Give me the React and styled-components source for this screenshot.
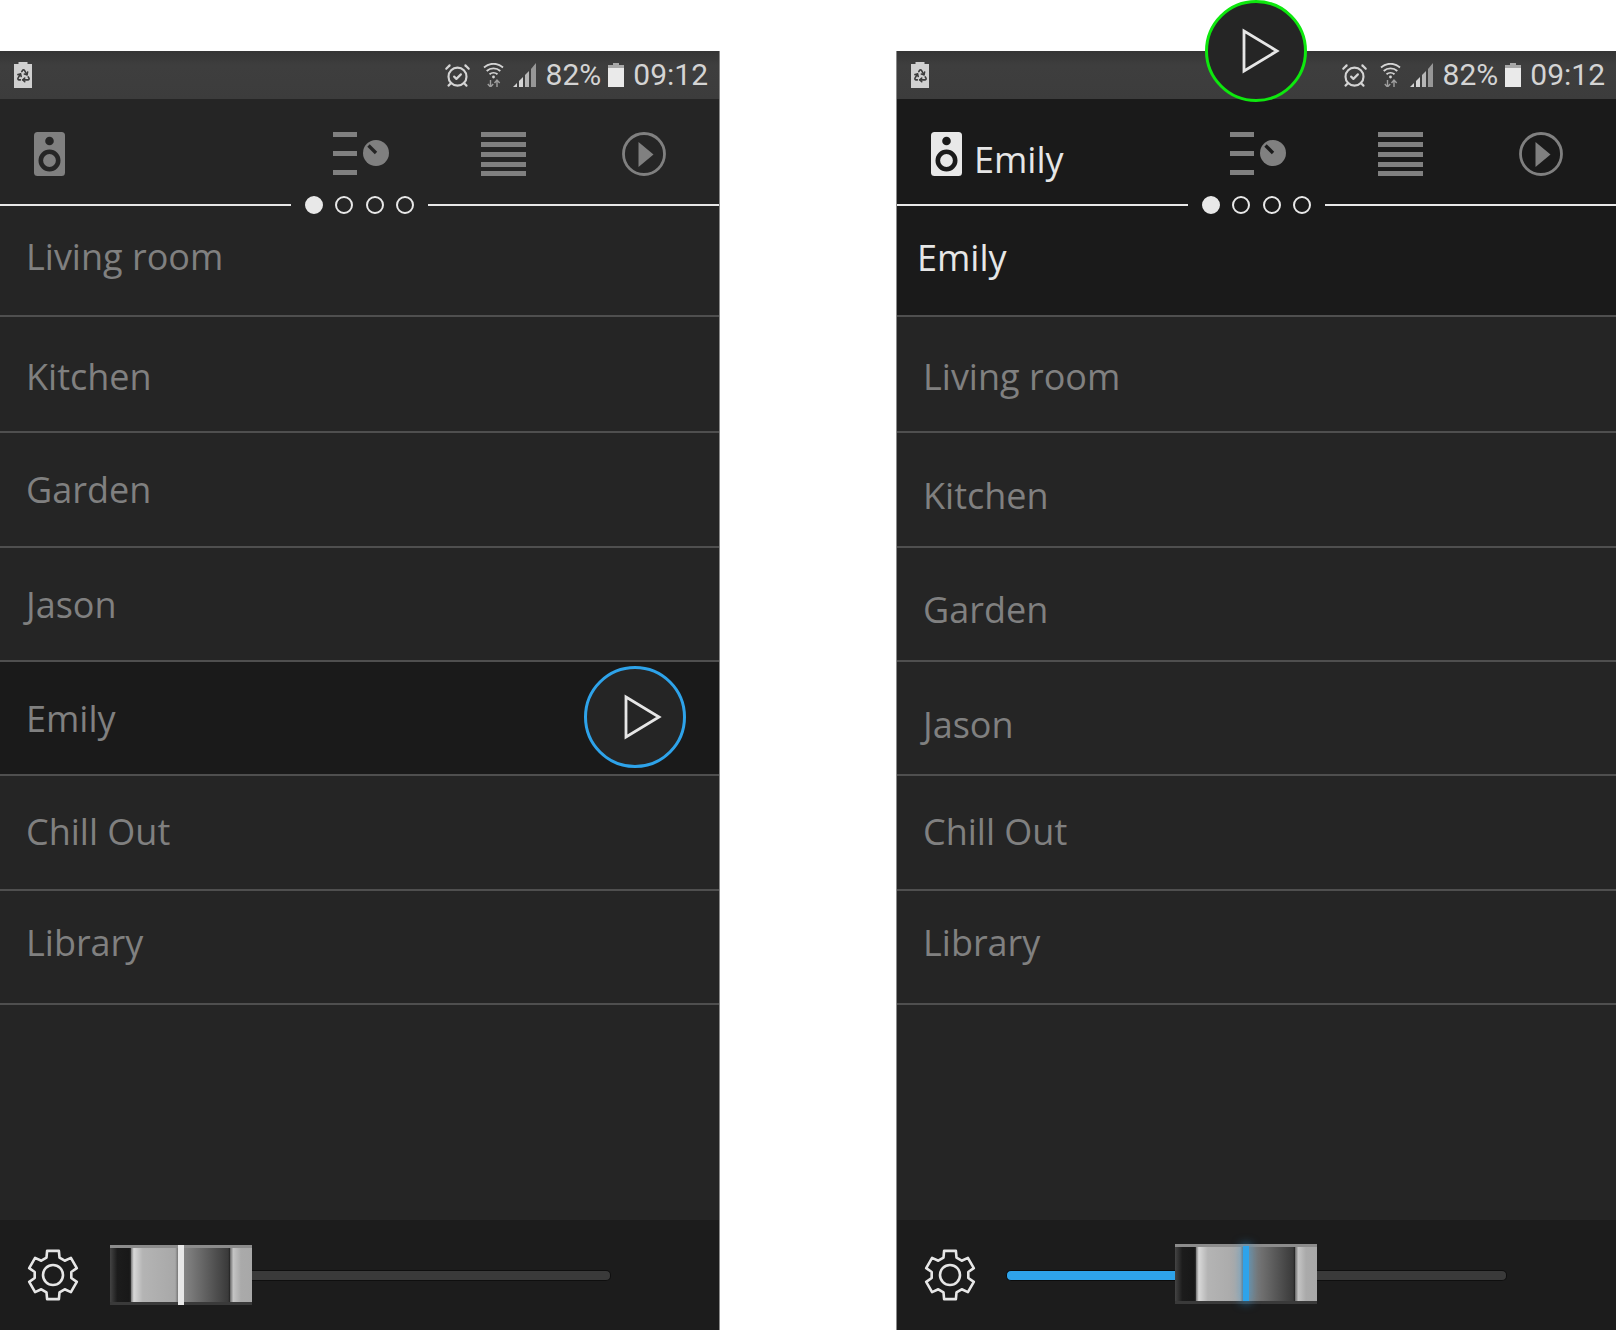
import React from "react";
import styled, { createGlobalStyle } from "styled-components";
import { AlarmClockCheck, Recycle } from "lucide-react";

const Global = createGlobalStyle`
  html, body { margin: 0; padding: 0; background: #fff; }
  body { font-family: "Open Sans", "Liberation Sans", sans-serif; overflow: hidden; }
  * { box-sizing: border-box; }
`;

const Page = styled.div`
  width: 1616px;
  height: 1330px;
  padding-top: 51px;
  display: flex;
  gap: 176px;
  background: #fff;
`;

const Phone = styled.section`
  position: relative;
  width: 720px;
  height: 1279px;
  display: flex;
  flex-direction: column;
  background: #252525;
  border-${(p) => p.$edge}: 1px solid #8a8a8a;
`;

const StatusBar = styled.div`
  height: 48px;
  flex: none;
  display: flex;
  align-items: center;
  background: linear-gradient(#353535, #3e3e3e 30%, #3c3c3c);
  color: #d4d4d4;
  font-family: Roboto, "Liberation Sans", sans-serif;
  font-size: 30px;
  padding-left: ${(p) => p.$pad}px;
`;

const StatusSlot = styled.span`
  display: flex;
  align-items: center;
  flex: none;
  margin-left: ${(p) => p.$ml || 0}px;
`;

const StatusText = styled(StatusSlot)`
  margin-bottom: 2px;
`;

const StatusSpacer = styled.span`
  flex: 1;
`;

const BatteryBox = styled.span`
  position: relative;
  width: 18px;
  height: 26px;
  display: flex;
  align-items: center;
  justify-content: center;
  color: #3c3c3c;
  background: #d0d0d0;
  clip-path: polygon(0 2px, 25% 2px, 25% 0, 75% 0, 75% 2px, 100% 2px, 100% 100%, 0 100%);
`;

const Header = styled.header`
  flex: none;
  height: 115px;
  display: flex;
  flex-direction: column;
  background: ${(p) => (p.$dark ? "#1a1a1a" : "#252525")};
`;

const HeaderIcons = styled.div`
  height: 97px;
  display: flex;
  align-items: flex-start;
  padding-top: 33px;
`;

const Brand = styled.div`
  flex: 1;
  display: flex;
  align-items: flex-start;
  gap: 12px;
  padding-left: ${(p) => p.$pad}px;
  color: ${(p) => p.$color};
`;

const BrandName = styled.span`
  font-size: 36px;
  line-height: 50px;
  color: #e6e6e6;
  margin-top: 3px;
`;

const Nav = styled.nav`
  display: grid;
  grid-template-columns: 148px 141px 97px;
  justify-items: start;
  color: #808080;
`;

const Divider = styled.div`
  height: 18px;
  display: flex;
  align-items: center;
`;

const Rule = styled.span`
  flex: 1;
  height: 2.5px;
  background: #e8e8e8;
`;

const Dots = styled.span`
  display: flex;
  gap: 12.3px;
  margin: 0 14px;
`;

const Dot = styled.span`
  width: 18px;
  height: 18px;
  border-radius: 50%;
  border: 2px solid #e8e8e8;
  background: ${(p) => (p.$on ? "#e8e8e8" : "transparent")};
`;

const List = styled.ul`
  list-style: none;
  margin: 0;
  padding: 0;
  flex: 1;
`;

const Row = styled.li`
  position: relative;
  height: ${(p) => p.$h}px;
  padding: ${(p) => p.$pad}px 0 0 ${(p) => p.$left}px;
  font-size: 36px;
  line-height: 50px;
  color: ${(p) => (p.$bright ? "#e6e6e6" : "#808080")};
  background: ${(p) => (p.$dark ? "#1a1a1a" : "transparent")};
  border-bottom: 2px solid #4f4f4f;
`;

const PlayBubble = styled.button`
  position: absolute;
  padding: 0 0 0 ${(p) => p.$shift}px;
  width: 102px;
  height: 102px;
  border-radius: 50%;
  display: flex;
  align-items: center;
  justify-content: center;
  background: #252525;
  color: #e6e6e6;
  border: 3px solid ${(p) => p.$ring};
  z-index: 2;
`;

const RowBubble = styled(PlayBubble)`
  right: 33px;
  top: 4px;
`;

const TopBubble = styled(PlayBubble)`
  left: 308px;
  top: -51px;
`;

const Footer = styled.footer`
  flex: none;
  height: 110px;
  display: flex;
  align-items: center;
  background: #1c1c1c;
  padding-left: 27px;
  color: #e6e6e6;
`;

const Slider = styled.div`
  margin-left: ${(p) => p.$ml}px;
  width: 501px;
  height: 61px;
  display: flex;
  align-items: center;
`;

const Fill = styled.span`
  height: 11px;
  background: #2ea3ea;
  border: 1px solid #0c0c0c;
  border-right: 0;
  border-radius: 5px 0 0 5px;
`;

const Rest = styled.span`
  flex: 1;
  height: 11px;
  background: #3a3a3a;
  border: 1px solid #0f0f0f;
  border-left: 0;
  border-radius: 0 5px 5px 0;
`;

const Thumb = styled.span`
  position: relative;
  flex: none;
  width: 142px;
  height: 60px;
  display: grid;
  grid-template-columns: 21px 47px ${(p) => p.$mark}px 46px 1fr;
  border-top: 3px solid #8c8c8c;
  border-bottom: 3px solid #3a3a3a;
  margin-top: ${(p) => (p.$lift ? -2 : 0)}px;
`;

const ThumbDark = styled.span`
  background: linear-gradient(90deg, #444 0, #1c1c1c 35%, #181818 92%, #333 100%);
`;

const ThumbLight = styled.span`
  background: linear-gradient(90deg, #777 0, #d8d8d8 6%, #b4b4b4 25%, #a8a8a8 94%, #777 100%);
`;

const ThumbShade = styled.span`
  background: linear-gradient(90deg, #858585 0, #3a3a3a 96%, #222 100%);
`;

const ThumbEnd = styled.span`
  background: linear-gradient(90deg, #666 0, #c4c4c4 15%, #aaa 50%, #a8a8a8 100%);
`;

const ThumbMark = styled.span`
  background: ${(p) => p.$color};
  margin: ${(p) => (p.$glow ? "-1px 0 0" : "-3px 0")};
  box-shadow: ${(p) => (p.$glow ? "0 0 10px 2px rgba(46,163,234,.55)" : "none")};
  position: relative;
  z-index: 1;
`;

const gearPath = (() => {
  const c = 26;
  const pts = [];
  for (let i = 0; i < 6; i++) {
    const a = (-90 + i * 60) * (Math.PI / 180);
    const pt = (r, d) => [c + r * Math.cos(a + d), c + r * Math.sin(a + d)];
    pts.push(pt(18.5, -0.36), pt(24.8, -0.24), pt(24.8, 0.24), pt(18.5, 0.36));
  }
  return "M" + pts.map((p) => p.map((n) => n.toFixed(1)).join(" ")).join("L") + "Z";
})();

const Gear = () => (
  <svg width="52" height="52" viewBox="0 0 52 52" fill="none" stroke="currentColor" strokeWidth="2.6" strokeLinejoin="round">
    <path d={gearPath} />
    <circle cx="26" cy="26" r="10" />
  </svg>
);

const Speaker = ({ bg }) => (
  <svg width="31" height="44" viewBox="0 0 31 44">
    <rect width="31" height="44" rx="3.5" fill="currentColor" />
    <circle cx="15.5" cy="9" r="4.3" fill={bg} />
    <circle cx="15.5" cy="28.5" r="8.7" fill="none" stroke={bg} strokeWidth="4.6" />
  </svg>
);

const KnobMenu = ({ bg }) => (
  <svg width="56" height="44" viewBox="0 0 56 44" fill="currentColor">
    <rect width="24" height="5" />
    <rect y="19" width="24" height="5" />
    <rect y="38" width="24" height="5" />
    <circle cx="43" cy="21" r="13" />
    <path d="M35.500 13.500 43 21" stroke={bg} strokeWidth="3.400" />
  </svg>
);

const Lines = () => (
  <svg width="45" height="44" viewBox="0 0 45 44" fill="currentColor">
    {[0, 10, 20, 30, 39].map((y) => (
      <rect key={y} y={y} width="45" height="5" />
    ))}
  </svg>
);

const PlayRing = () => (
  <svg width="44" height="44" viewBox="0 0 44 44">
    <circle cx="22" cy="22" r="20.500" fill="none" stroke="currentColor" strokeWidth="2.800" />
    <path d="M16.500 10v25L31.500 22.500z" fill="currentColor" />
  </svg>
);

const PlayOutline = () => (
  <svg width="38" height="46" viewBox="0 0 38 46" fill="none" stroke="currentColor" strokeWidth="2.800">
    <path d="M2 3v40L35 23z" />
  </svg>
);

const Wifi = () => (
  <svg width="21" height="24" viewBox="0 0 21 24" fill="none" stroke="currentColor">
    <path d="M1 4.500C6.500-.5 14.500-.5 20 4.500" strokeWidth="1.800" />
    <path d="M3.700 8C7.500 4.500 13.500 4.500 17.300 8" strokeWidth="1.800" />
    <path d="M6.500 11.300C8.800 9.300 12.200 9.300 14.500 11.300" strokeWidth="1.800" />
    <circle cx="10.500" cy="14" r="1.400" fill="currentColor" stroke="none" />
    <path d="M7.500 17v7M4.800 21l2.700 3 2.700-3" strokeWidth="1.400" opacity=".65" />
    <path d="M14 24v-7M11.500 20l2.500-3 2.700 3" strokeWidth="1.400" opacity=".65" />
  </svg>
);

const Signal = () => (
  <svg width="24" height="24" viewBox="0 0 24 24" fill="currentColor">
    <path d="M0 24l4-4v4z" />
    <path d="M6 24v-6l4-4v10z" />
    <path d="M12 24V12l4-4v16z" opacity=".8" />
    <path d="M18 24V6l5-6v24z" opacity=".6" />
  </svg>
);

const Battery = () => (
  <svg width="16" height="24" viewBox="0 0 16 24">
    <path d="M5 0h6v2h5v4H0V2h5z" fill="#a8a8a8" />
    <rect y="5" width="16" height="19" fill="#eaeaea" />
  </svg>
);

const Status = () => (
  <StatusBar $pad={14}>
    <StatusSlot>
      <BatteryBox>
        <Recycle size={15} strokeWidth={2.6} />
      </BatteryBox>
    </StatusSlot>
    <StatusSpacer />
    <StatusSlot>
      <AlarmClockCheck size={27} strokeWidth={1.9} />
    </StatusSlot>
    <StatusSlot $ml={12}>
      <Wifi />
    </StatusSlot>
    <StatusSlot $ml={9}>
      <Signal />
    </StatusSlot>
    <StatusText $ml={9}>82%</StatusText>
    <StatusSlot $ml={7}>
      <Battery />
    </StatusSlot>
    <StatusText $ml={9}>09:12</StatusText>
    <StatusSlot $ml={11} />
  </StatusBar>
);

const HEIGHTS = [103, 116, 115, 114, 114, 115, 114];

const LEFT_ROWS = [
  { name: "Living room", pad: 18 },
  { name: "Kitchen", pad: 35 },
  { name: "Garden", pad: 32 },
  { name: "Jason", pad: 32 },
  { name: "Emily", pad: 32, dark: true, play: true },
  { name: "Chill Out", pad: 31 },
  { name: "Library", pad: 27 },
];

const RIGHT_ROWS = [
  { name: "Emily", pad: 19, dark: true, bright: true, left: 20 },
  { name: "Living room", pad: 35 },
  { name: "Kitchen", pad: 38 },
  { name: "Garden", pad: 37 },
  { name: "Jason", pad: 38 },
  { name: "Chill Out", pad: 31 },
  { name: "Library", pad: 27 },
];

const Panel = ({ rows, edge, selected, mark, fill, lift, glow }) => {
  const bg = selected ? "#1a1a1a" : "#252525";
  return (
    <Phone $edge={edge}>
      {selected && (
        <TopBubble $ring="#0ee80e" $shift={9}>
          <PlayOutline />
        </TopBubble>
      )}
      <Status />
      <Header $dark={selected}>
        <HeaderIcons>
          <Brand $pad={34} $color={selected ? "#e8e8e8" : "#808080"}>
            <Speaker bg={bg} />
            {selected && <BrandName>Emily</BrandName>}
          </Brand>
          <Nav>
            <KnobMenu bg={bg} />
            <Lines />
            <PlayRing />
          </Nav>
        </HeaderIcons>
        <Divider>
          <Rule />
          <Dots>
            <Dot $on />
            <Dot />
            <Dot />
            <Dot />
          </Dots>
          <Rule />
        </Divider>
      </Header>
      <List>
        {rows.map((r, i) => (
          <Row key={r.name} $h={HEIGHTS[i]} $pad={r.pad} $left={r.left ?? 26} $dark={r.dark} $bright={r.bright}>
            {r.name}
            {r.play && (
              <RowBubble $ring="#2ea3ea" $shift={15}>
                <PlayOutline />
              </RowBubble>
            )}
          </Row>
        ))}
      </List>
      <Footer>
        <Gear />
        <Slider $ml={selected ? 30 : 31}>
          {fill > 0 && <Fill style={{ width: fill }} />}
          <Thumb $mark={6} $lift={lift}>
            <ThumbDark />
            <ThumbLight />
            <ThumbMark $color={mark} $glow={glow} />
            <ThumbShade />
            <ThumbEnd />
          </Thumb>
          <Rest />
        </Slider>
      </Footer>
    </Phone>
  );
};

export default function App() {
  return (
    <>
      <Global />
      <Page>
        <Panel rows={LEFT_ROWS} edge="right" mark="#e8e8e8" fill={0} />
        <Panel rows={RIGHT_ROWS} edge="left" selected mark="#2ea3ea" fill={169} lift glow />
      </Page>
    </>
  );
}
